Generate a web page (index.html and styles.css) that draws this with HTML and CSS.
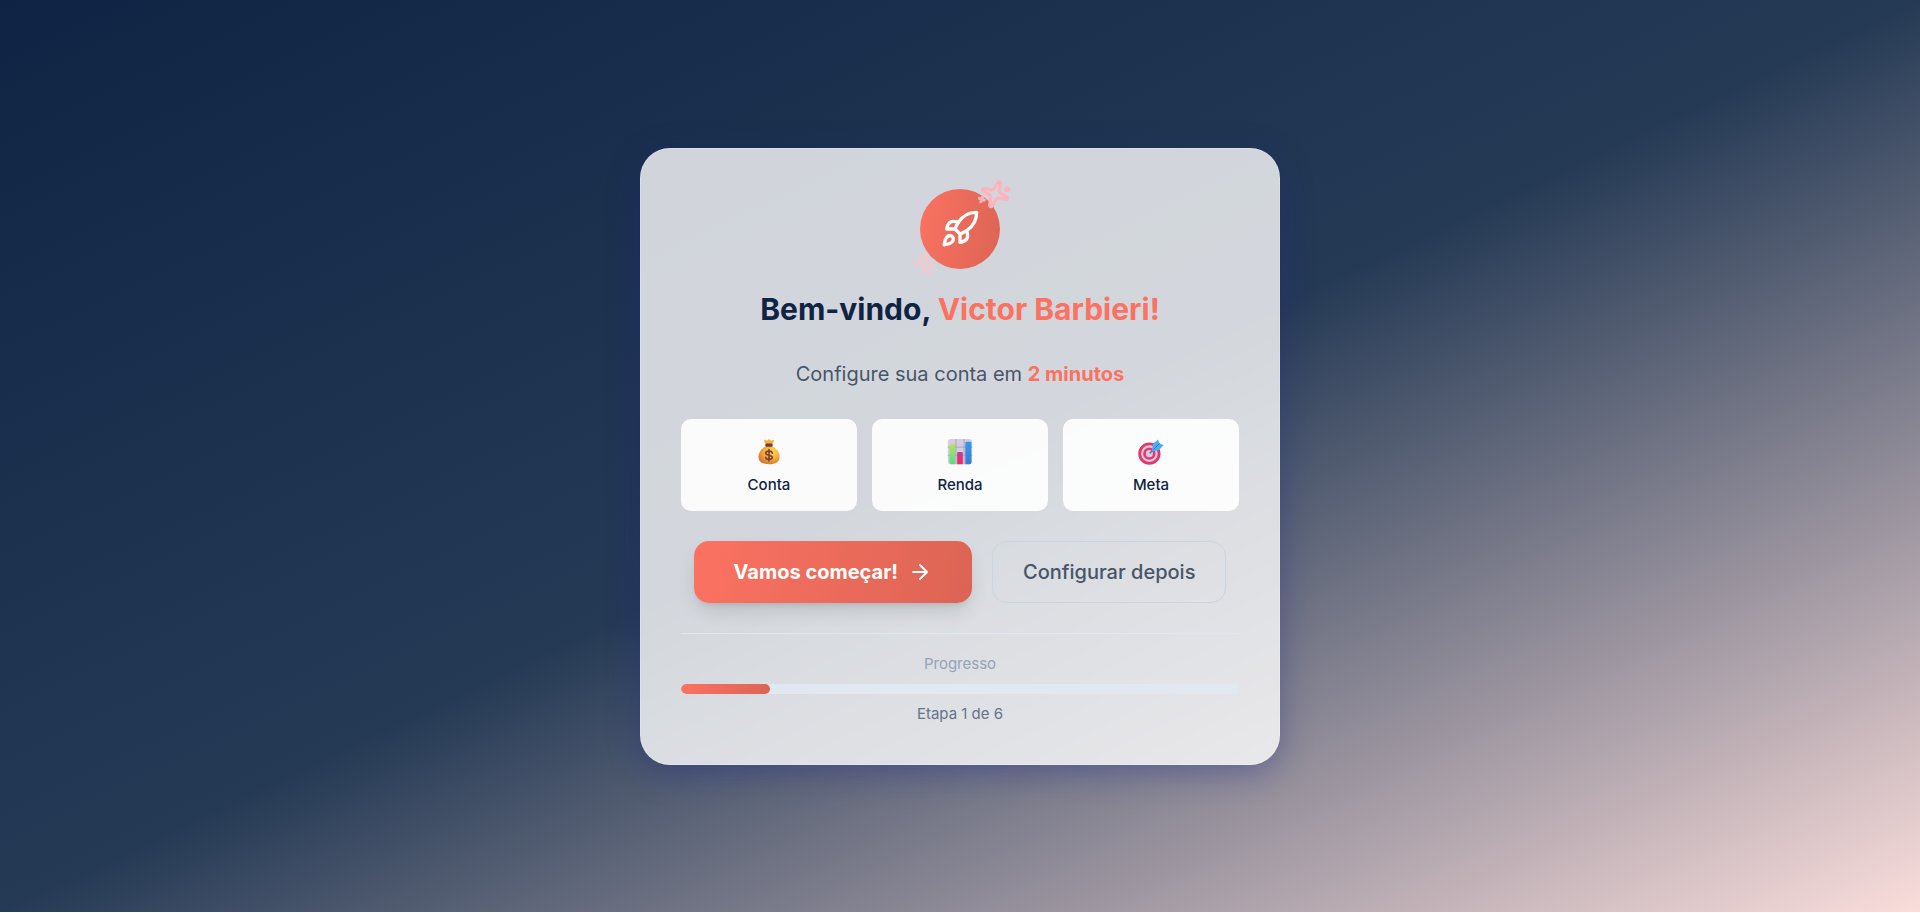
FILE: index.html
```html
<!DOCTYPE html>
<html lang="pt-BR">
<head>
<meta charset="utf-8">
<meta name="viewport" content="width=device-width, initial-scale=1">
<title>Bem-vindo</title>
<link rel="stylesheet" href="styles.css">
</head>
<body>
<main class="page">
  <section class="card">
    <div class="badge">
      <svg class="rocket" viewBox="0 0 24 24" aria-hidden="true"><path d="M4.5 16.5c-1.5 1.26-2 5-2 5s3.74-.5 5-2c.71-.84.7-2.13-.09-2.91a2.18 2.18 0 0 0-2.91-.09z"/><path d="m12 15-3-3a22 22 0 0 1 2-3.95A12.88 12.88 0 0 1 22 2c0 2.72-.78 7.5-6 11a22.35 22.35 0 0 1-4 2z"/><path d="M9 12H4s.55-3.03 2-4c1.62-1.08 5 0 5 0"/><path d="M12 15v5s3.03-.55 4-2c1.08-1.62 0-5 0-5"/></svg>
      <svg class="sparkle sparkle-top" viewBox="0 0 24 24" aria-hidden="true"><path d="M11.017 2.814a1 1 0 0 1 1.966 0l1.051 5.558a2 2 0 0 0 1.594 1.594l5.558 1.051a1 1 0 0 1 0 1.966l-5.558 1.051a2 2 0 0 0-1.594 1.594l-1.051 5.558a1 1 0 0 1-1.966 0l-1.051-5.558a2 2 0 0 0-1.594-1.594l-5.558-1.051a1 1 0 0 1 0-1.966l5.558-1.051a2 2 0 0 0 1.594-1.594z"/><path d="M20 3v4M22 5h-4"/><circle cx="4.500" cy="18.500" r="1"/></svg>
      <svg class="sparkle sparkle-bottom" viewBox="0 0 24 24" aria-hidden="true"><path d="M11.017 2.814a1 1 0 0 1 1.966 0l1.051 5.558a2 2 0 0 0 1.594 1.594l5.558 1.051a1 1 0 0 1 0 1.966l-5.558 1.051a2 2 0 0 0-1.594 1.594l-1.051 5.558a1 1 0 0 1-1.966 0l-1.051-5.558a2 2 0 0 0-1.594-1.594l-5.558-1.051a1 1 0 0 1 0-1.966l5.558-1.051a2 2 0 0 0 1.594-1.594z"/><path d="M20 3v4M22 5h-4"/><circle cx="4.500" cy="18.500" r="1"/></svg>
    </div>
    <h1 class="title">Bem-vindo, <span class="accent">Victor Barbieri!</span></h1>
    <p class="subtitle">Configure sua conta em <strong class="accent">2 minutos</strong></p>
    <ul class="features">
      <li class="feature">
        <svg class="emoji" viewBox="0 0 32 32" aria-hidden="true">
          <defs><radialGradient id="bag" cx=".65" cy=".3" r=".8"><stop offset="0" stop-color="#ffd84f"/><stop offset=".5" stop-color="#f6ab36"/><stop offset="1" stop-color="#c96f36"/></radialGradient></defs>
          <path fill="url(#bag)" d="M12 9C7 12 3 16 3 22c0 6 5 9 13 9s13-3 13-9c0-6-4-10-9-13z"/>
          <path fill="#f5b137" d="M12 6 10 2.500c-.5-1.300 1-2 2-1.200l1.500 1L15 .8c.5-.6 1.500-.6 2 0l1.500 1.500 1.500-1c1-.8 2.500.1 2 1.200L20 6z"/>
          <rect x="11.500" y="5.500" width="9" height="4" rx="1.500" fill="#6d3c38"/>
          <path fill="none" stroke="#7a4238" stroke-width="2" stroke-linecap="round" d="M16 13v14M20 17.500c0-3.500-8-3.500-8 0 0 3 8 2 8 5 0 3.500-8 3.500-8 0"/>
        </svg>
        <span>Conta</span>
      </li>
      <li class="feature">
        <svg class="emoji" viewBox="0 0 32 32" aria-hidden="true">
          <defs><linearGradient id="g1" x2="0" y2="1"><stop stop-color="#b3e45a"/><stop offset="1" stop-color="#55dd8d"/></linearGradient><linearGradient id="g2" x2="0" y2="1"><stop stop-color="#c83b8c"/><stop offset="1" stop-color="#ee2c62"/></linearGradient><linearGradient id="g3" x2="0" y2="1"><stop stop-color="#2d9cf0"/><stop offset="1" stop-color="#3f78d0"/></linearGradient></defs>
          <rect x="1" y="0" width="30" height="31" rx="4" fill="#d6cee0"/>
          <path stroke="#aaa1b6" stroke-width="1.200" d="M11 0v31M21 0v31M1 10h30M1 20h30"/>
          <path fill="url(#g1)" d="M3 8q0-1.500 1.500-1.500h4Q10 6.500 10 8v23H5q-2 0-2-2z"/>
          <path fill="url(#g2)" d="M12.500 17.500q0-1.500 1.500-1.500h4q1.500 0 1.500 1.500V31h-7z"/>
          <path fill="url(#g3)" d="M22.500 5q0-1.500 1.500-1.500h4.500q1.500 0 1.500 1.500v24q0 2-2 2h-5.500z"/>
        </svg>
        <span>Renda</span>
      </li>
      <li class="feature">
        <svg class="emoji" viewBox="0 0 32 32" aria-hidden="true">
          <circle cx="14" cy="18" r="12" fill="#d9cbe0" stroke="#e53769" stroke-width="3.400"/>
          <circle cx="14" cy="18" r="6" fill="#d9cbe0" stroke="#e53769" stroke-width="3.200"/>
          <path stroke="#657791" stroke-width="2" stroke-linecap="round" d="m15 17 6-6"/>
          <path fill="#4aaef0" d="m17 14 1.500-8L24.500.5l2 5 5 2-5.500 6-8 2z"/>
          <path stroke="#2379cb" stroke-width="1.200" d="m19 13 7.500-7.500"/>
        </svg>
        <span>Meta</span>
      </li>
    </ul>
    <div class="actions">
      <button class="btn btn-primary" type="button">Vamos começar!
        <svg class="arrow" viewBox="0 0 24 24" aria-hidden="true"><path d="M5 12h14M12 5l7 7-7 7"/></svg>
      </button>
      <button class="btn btn-secondary" type="button">Configurar depois</button>
    </div>
    <div class="progress">
      <span class="progress-label" id="progress-label">Progresso</span>
      <div class="track" role="progressbar" aria-labelledby="progress-label" aria-valuemin="0" aria-valuemax="6" aria-valuenow="1"><div class="fill" style="width:16%"></div></div>
      <span class="progress-step">Etapa 1 de 6</span>
    </div>
  </section>
</main>
</body>
</html>
```
FILE: styles.css
```css
* { box-sizing: border-box; }
body {
  margin: 0;
  background: #fff;
  font-family: Inter, "Liberation Sans", sans-serif;
}
.page {
  min-height: calc(100vh - 1px);
  display: flex;
  align-items: center;
  justify-content: center;
  padding: 20px;
  background: linear-gradient(to bottom right, #0f2444 0%, #253a55 50%, #fadddb 100%);
}
.card {
  width: 100%;
  max-width: 640px;
  padding: 40px;
  border: 1px solid rgba(255, 255, 255, .2);
  border-radius: 30px;
  background: rgba(255, 255, 255, .8);
  box-shadow: 0 8px 32px rgba(31, 38, 135, .37);
  text-align: center;
}
.badge {
  position: relative;
  display: flex;
  align-items: center;
  justify-content: center;
  width: 80px;
  height: 80px;
  margin: 0 auto 20px;
  border-radius: 50%;
  background: linear-gradient(100deg, #fb7262, #dc6454);
}
.badge svg, .arrow {
  fill: none;
  stroke: currentColor;
  stroke-width: 2;
  stroke-linecap: round;
  stroke-linejoin: round;
}
.rocket { width: 40px; height: 40px; color: #fff; }
.sparkle { position: absolute; }
.badge .sparkle-top { top: -11px; right: -11px; width: 32px; height: 32px; color: #ffb3ba; stroke-width: 2.4; transform: rotate(200deg); }
.sparkle-bottom { bottom: -6px; left: -6px; width: 22px; height: 22px; color: #fcc5cc; transform: rotate(97deg); }
.title {
  margin: 0 0 30px;
  font-size: 30px;
  line-height: 40px;
  font-weight: 700;
  color: #0f2444;
}
.accent { color: #fb7262; }
.subtitle {
  margin: 0 0 30px;
  font-size: 20px;
  line-height: 30px;
  color: #475569;
}
.features {
  display: grid;
  grid-template-columns: repeat(3, 1fr);
  gap: 15px;
  margin: 0 0 30px;
  padding: 0;
  list-style: none;
}
.feature {
  display: flex;
  flex-direction: column;
  align-items: center;
  gap: 10px;
  padding: 20px 16px 16px;
  border-radius: 10px;
  background: rgba(255, 255, 255, .9);
  color: #0f2444;
  font-size: 15px;
  line-height: 20px;
  font-weight: 500;
}
.emoji { width: 26px; height: 26px; }
.actions {
  display: flex;
  flex-wrap: wrap;
  justify-content: center;
  gap: 20px;
  margin-bottom: 30px;
}
.btn {
  display: flex;
  align-items: center;
  gap: 10px;
  border-radius: 15px;
  font-family: inherit;
  font-size: 20px;
  line-height: 30px;
  cursor: pointer;
}
.btn-primary {
  padding: 16px 40px;
  border: 0;
  background: linear-gradient(100deg, #fb7262, #dc6454);
  color: #fff;
  font-weight: 700;
  box-shadow: 0 10px 20px -4px rgba(0, 0, 0, .14), 0 4px 6px -4px rgba(0, 0, 0, .12);
}
.arrow { width: 24px; height: 24px; }
.btn-secondary {
  padding: 15px 30px;
  border: 1px solid #cbd5e1;
  background: transparent;
  color: #475569;
  font-weight: 500;
}
.progress {
  display: flex;
  flex-direction: column;
  gap: 10px;
  padding-top: 20px;
  border-top: 1px solid #e2e8f0;
  font-size: 15px;
  line-height: 20px;
}
.progress-label { color: #94a3b8; }
.progress-step { color: #64748b; }
.track {
  height: 10px;
  border-radius: 5px;
  background: #e2e8f0;
  overflow: hidden;
}
.fill {
  height: 100%;
  border-radius: 5px;
  background: linear-gradient(100deg, #fb7262, #dc6454);
}
```
